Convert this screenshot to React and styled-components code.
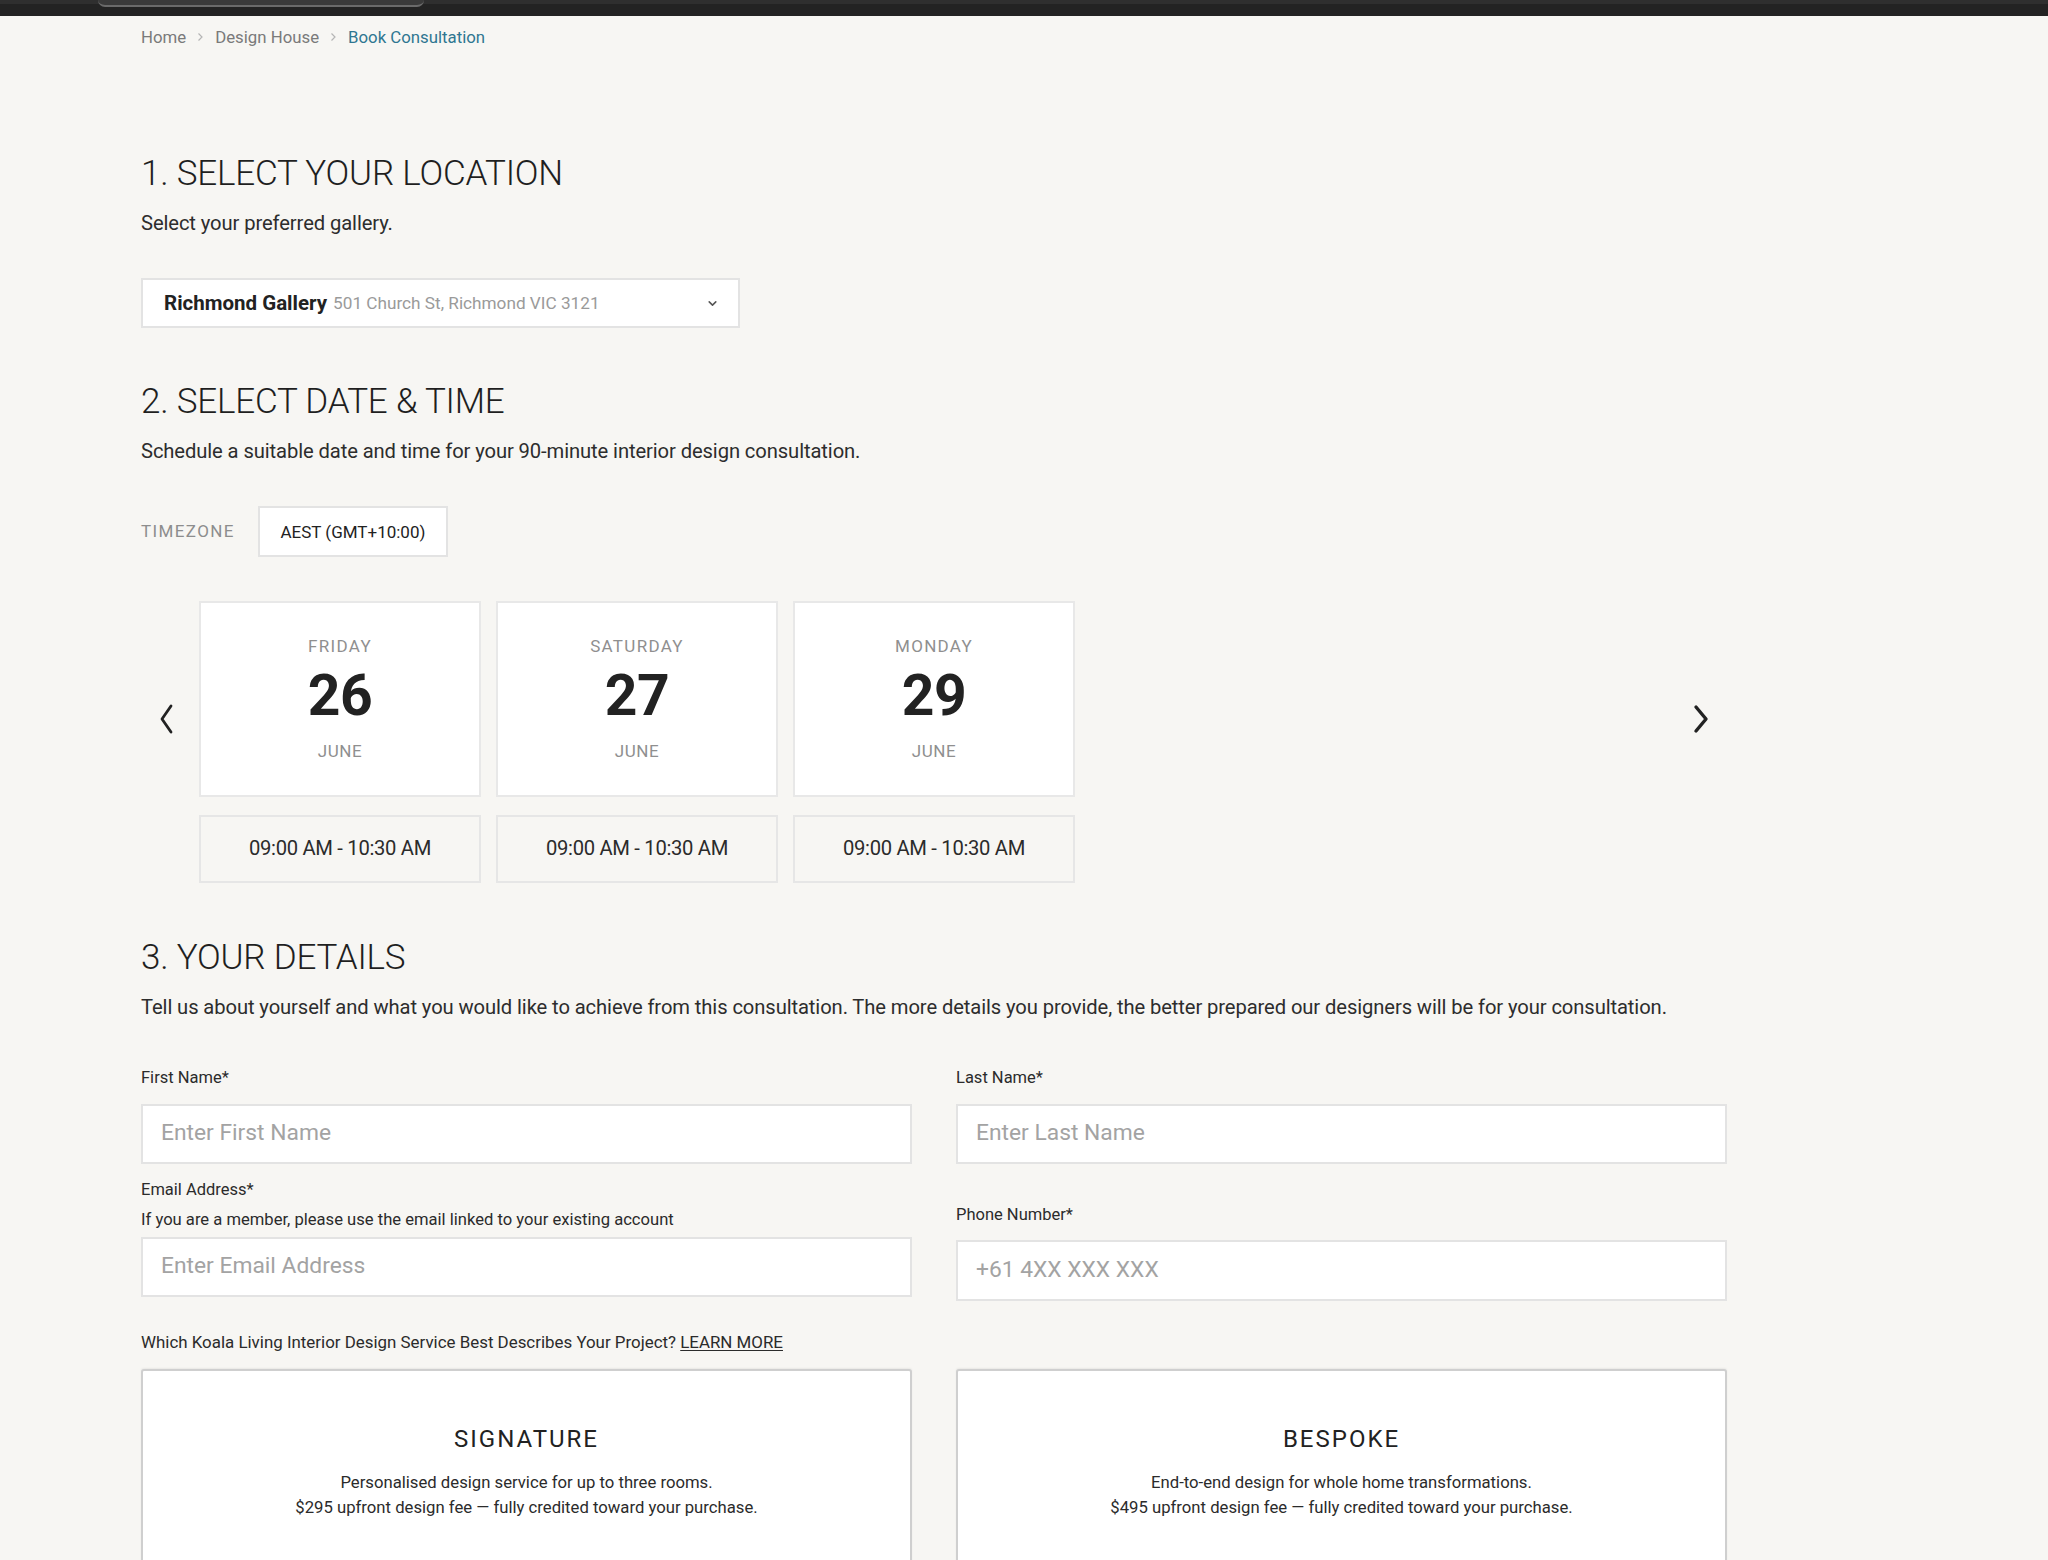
import React from "react";
import styled, { createGlobalStyle } from "styled-components";

const Global = createGlobalStyle`
  html, body { margin: 0; padding: 0; background: #f7f6f3; }
  body { font-family: Roboto, "Liberation Sans", Arial, sans-serif; color: #2b2b2b; }
  * { box-sizing: border-box; }
`;

const TopBar = styled.div`
  height: 16px;
  background: #232323;
  position: relative;
  border-top: 4px solid #2f2f2f;
`;

const TabShape = styled.div`
  position: absolute;
  left: 98px;
  top: -4px;
  width: 326px;
  height: 7px;
  background: #3a3a3a;
  border-bottom: 2px solid #6a6a6a;
  border-radius: 0 0 14px 14px;
`;

const Main = styled.main`
  width: 1586px;
  margin-left: 141px;
  padding-bottom: 60px;
`;

const Crumbs = styled.nav`
  display: flex;
  align-items: center;
  gap: 11px;
  margin-top: 10px;
  height: 22px;
  font-size: 16.8px;
  color: #7a7a7a;
`;

const Crumb = styled.span`
  color: ${(p) => (p.$active ? "#2f7691" : "#7a7a7a")};
`;

const CrumbSep = styled.span`
  display: inline-flex;
  color: #b5b5b5;
`;

const H = styled.h2`
  margin: ${(p) => p.$mt}px 0 0;
  font-size: 35px;
  line-height: 40px;
  font-weight: 300;
  color: #1f1f1f;
  letter-spacing: -0.2px;
`;

const Sub = styled.p`
  margin: 16px 0 0;
  font-size: 20.2px;
  line-height: 26px;
  color: #2d2d2d;
  letter-spacing: -0.1px;
`;

const SelectBox = styled.div`
  margin-top: 42px;
  width: 599px;
  height: 50px;
  background: #fff;
  border: 2px solid #e3e3e3;
  display: flex;
  align-items: center;
  padding: 0 20px 0 21px;
`;

const SelName = styled.span`
  font-weight: 700;
  font-size: 20.5px;
  color: #222;
  margin-right: 6px;
`;

const SelAddr = styled.span`
  font-size: 17.2px;
  color: #9a9a9a;
  flex: 1;
`;

const TzRow = styled.div`
  margin-top: 42px;
  display: flex;
  align-items: center;
  gap: 23px;
`;

const TzLabel = styled.span`
  font-size: 17px;
  letter-spacing: 1.4px;
  color: #8d8d8d;
  margin-top: -2px;
`;

const TzBox = styled.div`
  width: 190px;
  height: 51px;
  background: #fff;
  border: 2px solid #e3e3e3;
  display: flex;
  align-items: center;
  justify-content: center;
  font-size: 17px;
  color: #222;
`;

const Carousel = styled.div`
  margin-top: 44px;
  display: flex;
  align-items: flex-start;
`;

const Arrow = styled.button`
  width: 52px;
  height: 60px;
  margin-top: 88px;
  border: 0;
  background: transparent;
  padding: 0;
  display: flex;
  align-items: center;
  justify-content: center;
  cursor: pointer;
  color: #222;
`;

const Days = styled.div`
  display: flex;
  gap: 15px;
  margin-left: 6px;
  flex: 1;
`;

const DayCol = styled.div`
  width: 282px;
  display: flex;
  flex-direction: column;
  gap: 18px;
`;

const DayCard = styled.div`
  height: 196px;
  background: #fff;
  border: 2px solid #e8e8e8;
  display: flex;
  flex-direction: column;
  align-items: center;
  padding-top: 33px;
`;

const DayName = styled.div`
  font-size: 17px;
  letter-spacing: 1.3px;
  color: #8f8f8f;
  line-height: 20px;
`;

const DayNum = styled.div`
  font-size: 57px;
  font-weight: 700;
  line-height: 64px;
  color: #222;
  margin-top: 8px;
  letter-spacing: -0.5px;
`;

const DayMonth = styled.div`
  font-size: 17px;
  letter-spacing: 0.6px;
  color: #8f8f8f;
  line-height: 20px;
  margin-top: 13px;
`;

const Slot = styled.div`
  height: 68px;
  border: 2px solid #e6e6e6;
  display: flex;
  align-items: center;
  justify-content: center;
  font-size: 20.2px;
  color: #2b2b2b;
  letter-spacing: -0.3px;
  padding-bottom: 2px;
`;

const FormGrid = styled.div`
  margin-top: 48px;
  display: grid;
  grid-template-columns: 771px 771px;
  column-gap: 44px;
  row-gap: 16px;
  align-items: start;
`;

const Field = styled.div`
  display: flex;
  flex-direction: column;
  padding-top: ${(p) => p.$pt ?? 0}px;
`;

const Label = styled.label`
  font-size: 16.5px;
  line-height: 20px;
  color: #2b2b2b;
  margin-bottom: ${(p) => p.$mb ?? 16}px;
`;

const Hint = styled.div`
  font-size: 16.6px;
  line-height: 20px;
  color: #2b2b2b;
  margin-bottom: 7px;
`;

const Input = styled.input`
  height: ${(p) => p.$h ?? 60}px;
  width: 100%;
  background: #fff;
  border: 2px solid #e3e3e3;
  padding: 0 18px 3px;
  font-family: inherit;
  font-size: 22.8px;
  color: #222;
  outline: none;
  &::placeholder { color: #a3a3a3; }
`;

const Question = styled.div`
  margin-top: 31px;
  font-size: 16.9px;
  line-height: 20px;
  color: #2b2b2b;
`;

const LearnMore = styled.a`
  color: #2b2b2b;
  text-decoration: underline;
  text-underline-offset: 2px;
`;

const Services = styled.div`
  margin-top: 17px;
  display: grid;
  grid-template-columns: 771px 771px;
  column-gap: 44px;
`;

const ServiceCard = styled.div`
  height: 230px;
  background: #fff;
  border: 2px solid #cfcfcf;
  border-radius: 3px;
  box-shadow: 0 -1px 2px rgba(0, 0, 0, 0.06);
  display: flex;
  flex-direction: column;
  align-items: center;
  padding-top: 53px;
`;

const ServiceTitle = styled.div`
  font-size: 24px;
  letter-spacing: 2px;
  line-height: 30px;
  color: #222;
`;

const ServiceDesc = styled.div`
  margin-top: 16px;
  font-size: 16.7px;
  line-height: 25px;
  color: #2b2b2b;
  text-align: center;
`;

const ChevronSmall = () => (
  <svg width="11" height="11" viewBox="0 0 10 10" fill="none">
    <path d="M2 3.5 L5 6.5 L8 3.5" stroke="#555" strokeWidth="1.4" strokeLinecap="round" strokeLinejoin="round" />
  </svg>
);

const CrumbChevron = () => (
  <svg width="7" height="10" viewBox="0 0 7 10" fill="none">
    <path d="M1.5 1.5 L5 5 L1.5 8.5" stroke="currentColor" strokeWidth="1.2" />
  </svg>
);

const ArrowIcon = ({ dir }) => (
  <svg width="20" height="32" viewBox="0 0 20 32" fill="none">
    {dir === "left" ? (
      <path d="M14 3 L5 16 L14 29" stroke="#222" strokeWidth="2.8" strokeLinecap="round" strokeLinejoin="round" />
    ) : (
      <path d="M5 4 L15 16 L5 28" stroke="#222" strokeWidth="3.4" strokeLinecap="round" strokeLinejoin="round" />
    )}
  </svg>
);

const days = [
  { name: "FRIDAY", num: "26" },
  { name: "SATURDAY", num: "27" },
  { name: "MONDAY", num: "29" },
];

export default function App() {
  return (
    <>
      <Global />
      <TopBar>
        <TabShape />
      </TopBar>
      <Main>
        <Crumbs>
          <Crumb>Home</Crumb>
          <CrumbSep><CrumbChevron /></CrumbSep>
          <Crumb>Design House</Crumb>
          <CrumbSep><CrumbChevron /></CrumbSep>
          <Crumb $active>Book Consultation</Crumb>
        </Crumbs>

        <H $mt={106}>1. SELECT YOUR LOCATION</H>
        <Sub>Select your preferred gallery.</Sub>
        <SelectBox>
          <SelName>Richmond Gallery</SelName>
          <SelAddr>501 Church St, Richmond VIC 3121</SelAddr>
          <ChevronSmall />
        </SelectBox>

        <H $mt={54}>2. SELECT DATE &amp; TIME</H>
        <Sub>Schedule a suitable date and time for your 90-minute interior design consultation.</Sub>
        <TzRow>
          <TzLabel>TIMEZONE</TzLabel>
          <TzBox>AEST (GMT+10:00)</TzBox>
        </TzRow>

        <Carousel>
          <Arrow aria-label="Previous"><ArrowIcon dir="left" /></Arrow>
          <Days>
            {days.map((d) => (
              <DayCol key={d.num}>
                <DayCard>
                  <DayName>{d.name}</DayName>
                  <DayNum>{d.num}</DayNum>
                  <DayMonth>JUNE</DayMonth>
                </DayCard>
                <Slot>09:00 AM - 10:30 AM</Slot>
              </DayCol>
            ))}
          </Days>
          <Arrow aria-label="Next"><ArrowIcon dir="right" /></Arrow>
        </Carousel>

        <H $mt={55}>3. YOUR DETAILS</H>
        <Sub>
          Tell us about yourself and what you would like to achieve from this consultation. The more details you provide, the better prepared our designers will be for your consultation.
        </Sub>

        <FormGrid>
          <Field>
            <Label>First Name*</Label>
            <Input placeholder="Enter First Name" />
          </Field>
          <Field>
            <Label>Last Name*</Label>
            <Input placeholder="Enter Last Name" />
          </Field>
          <Field>
            <Label $mb={10}>Email Address*</Label>
            <Hint>If you are a member, please use the email linked to your existing account</Hint>
            <Input placeholder="Enter Email Address" />
          </Field>
          <Field $pt={25}>
            <Label $mb={15}>Phone Number*</Label>
            <Input $h={61} placeholder="+61 4XX XXX XXX" />
          </Field>
        </FormGrid>

        <Question>
          Which Koala Living Interior Design Service Best Describes Your Project? <LearnMore href="#">LEARN MORE</LearnMore>
        </Question>

        <Services>
          <ServiceCard>
            <ServiceTitle>SIGNATURE</ServiceTitle>
            <ServiceDesc>
              Personalised design service for up to three rooms.
              <br />
              $295 upfront design fee — fully credited toward your purchase.
            </ServiceDesc>
          </ServiceCard>
          <ServiceCard>
            <ServiceTitle>BESPOKE</ServiceTitle>
            <ServiceDesc>
              End-to-end design for whole home transformations.
              <br />
              $495 upfront design fee — fully credited toward your purchase.
            </ServiceDesc>
          </ServiceCard>
        </Services>
      </Main>
    </>
  );
}
